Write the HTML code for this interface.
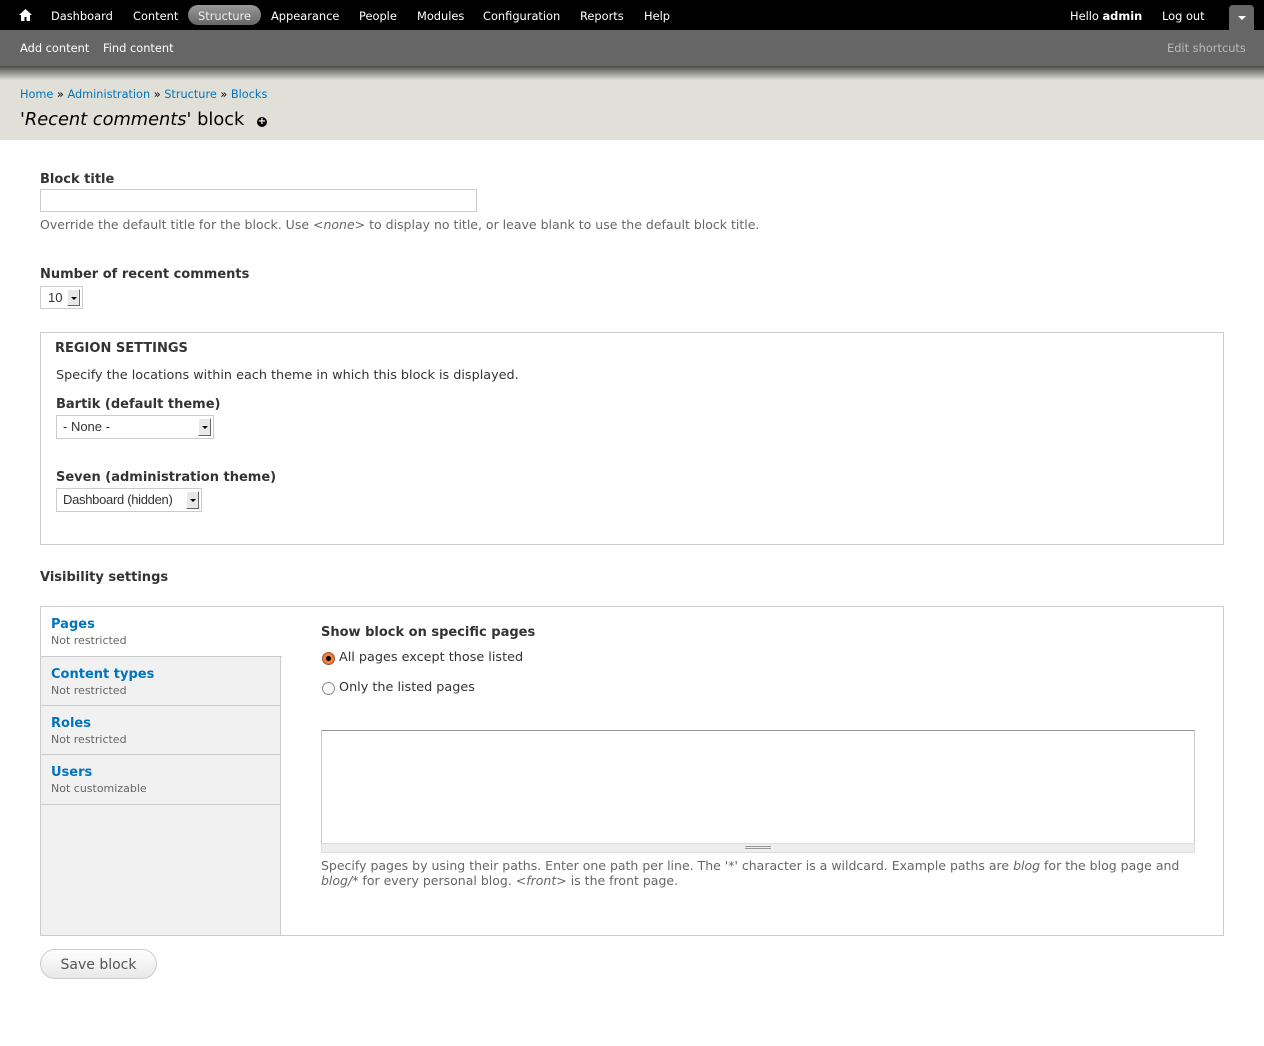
<!DOCTYPE html>
<html><head><meta charset="utf-8"><style>
*{box-sizing:border-box;margin:0;padding:0}
body{width:1264px;height:1046px;background:#fff;font-family:"DejaVu Sans","Liberation Sans",sans-serif;color:#333;position:relative;overflow:hidden}
.a{position:absolute;white-space:nowrap}
#tb{position:absolute;left:0;top:0;width:1264px;height:30px;background:#000;color:#fff;font-size:11.4px}
#tb2{position:absolute;left:0;top:30px;width:1264px;height:36px;background:#666;color:#fff;font-size:11.4px}
#shadow{position:absolute;left:0;top:66px;width:1264px;height:14px;background:linear-gradient(#4a4a48,#e0e0d8)}
#hdr{position:absolute;left:0;top:66px;width:1264px;height:74px;background:#e0e0d8;z-index:-1}
.lnk{color:#0074bd}
.lbl{font-weight:bold;font-size:13px;color:#333}
.desc{font-size:12.5px;color:#666}
.box{position:absolute;border:1px solid #ccc;background:#fff}
.sel{position:absolute;border:1px solid #ccc;background:#fff;font-family:"Liberation Sans",sans-serif;font-size:13px;color:#333}
.arr{position:absolute;top:2px;right:2px;width:13px;bottom:2px;background:#e8e8e8;border:1px solid;border-color:#fff #666 #666 #fff}
.arr:after{content:"";position:absolute;left:3px;top:7px;border-left:3px solid transparent;border-right:3px solid transparent;border-top:3px solid #000}
.tab{position:absolute;left:41px;width:240px;border-bottom:1px solid #ccc;background:#f1f1f1}
.tab b{position:absolute;left:10px;top:10px;font-size:13px;color:#0074bd}
.tab span{position:absolute;left:10px;top:27px;font-size:11px;color:#666}
</style></head><body>
<div id="tb">
<svg class="a" style="left:19px;top:9px" width="13" height="12" viewBox="0 0 13 12"><path d="M6.5 0L0 6h2v6h3.5V8h2v4H11V6h2z" fill="#fff"/></svg>
<div class="a" style="left:188px;top:5px;width:73px;height:20px;border-radius:10px;background:linear-gradient(#999,#666)"></div>
<span class="a" style="left:51px;top:9px">Dashboard</span>
<span class="a" style="left:133px;top:9px">Content</span>
<span class="a" style="left:198px;top:9px;color:#eee">Structure</span>
<span class="a" style="left:271px;top:9px">Appearance</span>
<span class="a" style="left:359px;top:9px">People</span>
<span class="a" style="left:417px;top:9px">Modules</span>
<span class="a" style="left:483px;top:9px">Configuration</span>
<span class="a" style="left:580px;top:9px">Reports</span>
<span class="a" style="left:644px;top:9px">Help</span>
<span class="a" style="left:1070px;top:9px">Hello <b>admin</b></span>
<span class="a" style="left:1162px;top:9px">Log out</span>
<div class="a" style="left:1229px;top:5px;width:25px;height:25px;background:#666;border-radius:4px 4px 0 0"></div>
<div class="a" style="left:1238px;top:16px;border-left:4px solid transparent;border-right:4px solid transparent;border-top:4px solid #fff"></div>
</div>
<div id="tb2">
<span class="a" style="left:20px;top:11px">Add content</span>
<span class="a" style="left:103px;top:11px">Find content</span>
<span class="a" style="left:1167px;top:11px;color:#bbb">Edit shortcuts</span>
</div>
<div id="hdr"></div><div id="shadow"></div>
<div class="a" style="left:20px;top:88px;font-size:11.3px;color:#000"><span class="lnk">Home</span> » <span class="lnk">Administration</span> » <span class="lnk">Structure</span> » <span class="lnk">Blocks</span></div>
<div class="a" style="left:20px;top:109px;font-size:17.8px;color:#000">'<i>Recent comments</i>' block</div>
<div class="a" style="left:257px;top:117px;width:10px;height:10px;border-radius:50%;background:#000;color:#fff;font-size:10px;line-height:10px;text-align:center;font-weight:bold">+</div>

<div class="a lbl" style="left:40px;top:172px">Block title</div>
<div class="box" style="left:40px;top:189px;width:437px;height:23px"></div>
<div class="a desc" style="left:40px;top:217px">Override the default title for the block. Use <i>&lt;none&gt;</i> to display no title, or leave blank to use the default block title.</div>

<div class="a lbl" style="left:40px;top:267px">Number of recent comments</div>
<div class="sel" style="left:40px;top:286px;width:43px;height:23px"><span class="a" style="left:7px;top:3px">10</span><div class="arr"></div></div>

<div class="box" style="left:40px;top:332px;width:1184px;height:213px"></div>
<div class="a lbl" style="left:55px;top:341px">REGION SETTINGS</div>
<div class="a" style="left:56px;top:368px;font-size:12.8px">Specify the locations within each theme in which this block is displayed.</div>
<div class="a lbl" style="left:56px;top:397px">Bartik (default theme)</div>
<div class="sel" style="left:56px;top:415px;width:158px;height:24px"><span class="a" style="left:6px;top:3px">- None -</span><div class="arr"></div></div>
<div class="a lbl" style="left:56px;top:470px">Seven (administration theme)</div>
<div class="sel" style="left:56px;top:488px;width:146px;height:24px"><span class="a" style="left:6px;top:3px;letter-spacing:-0.3px">Dashboard (hidden)</span><div class="arr"></div></div>

<div class="a lbl" style="left:40px;top:570px">Visibility settings</div>
<div class="box" style="left:40px;top:606px;width:1184px;height:330px"></div>
<div class="a" style="left:41px;top:607px;width:240px;height:328px;background:#f1f1f1;border-right:1px solid #ccc"></div>
<div class="tab" style="top:607px;height:50px;background:#fff;width:241px"><b>Pages</b><span>Not restricted</span></div>
<div class="tab" style="top:657px;height:49px;border-right:1px solid #ccc"><b>Content types</b><span>Not restricted</span></div>
<div class="tab" style="top:706px;height:49px;border-right:1px solid #ccc"><b>Roles</b><span>Not restricted</span></div>
<div class="tab" style="top:755px;height:50px;border-right:1px solid #ccc"><b>Users</b><span>Not customizable</span></div>
<div class="a" style="left:40px;top:656px;width:241px;border-top:1px solid #ccc"></div>

<div class="a lbl" style="left:321px;top:625px">Show block on specific pages</div>
<div class="a" style="left:322px;top:652px;width:13px;height:13px;border-radius:50%;border:1px solid #a0522d;background:#f08040"><div style="margin:3px;width:5px;height:5px;border-radius:50%;background:#000"></div></div>
<div class="a" style="left:339px;top:650px;font-size:12.8px">All pages except those listed</div>
<div class="a" style="left:322px;top:682px;width:13px;height:13px;border-radius:50%;border:1px solid #888;background:#fafafa"></div>
<div class="a" style="left:339px;top:680px;font-size:12.8px">Only the listed pages</div>
<div class="box" style="left:321px;top:730px;width:874px;height:114px;border-color:#999 #ccc #ccc #ccc"></div>
<div class="a" style="left:321px;top:843px;width:874px;height:10px;background:#eee;border:1px solid #ddd"><div style="margin:2px auto;width:26px;border-top:1px solid #999;border-bottom:1px solid #999;height:3px"></div></div>
<div class="a desc" style="left:321px;top:858px;line-height:15px">Specify pages by using their paths. Enter one path per line. The '*' character is a wildcard. Example paths are <i>blog</i> for the blog page and<br><i>blog/*</i> for every personal blog. <i>&lt;front&gt;</i> is the front page.</div>

<div class="a" style="left:40px;top:949px;width:117px;height:30px;border:1px solid #ccc;border-radius:15px;background:linear-gradient(#fff,#e8e8e8);font-size:14px;color:#555;text-align:center;line-height:30px">Save block</div>
</body></html>
